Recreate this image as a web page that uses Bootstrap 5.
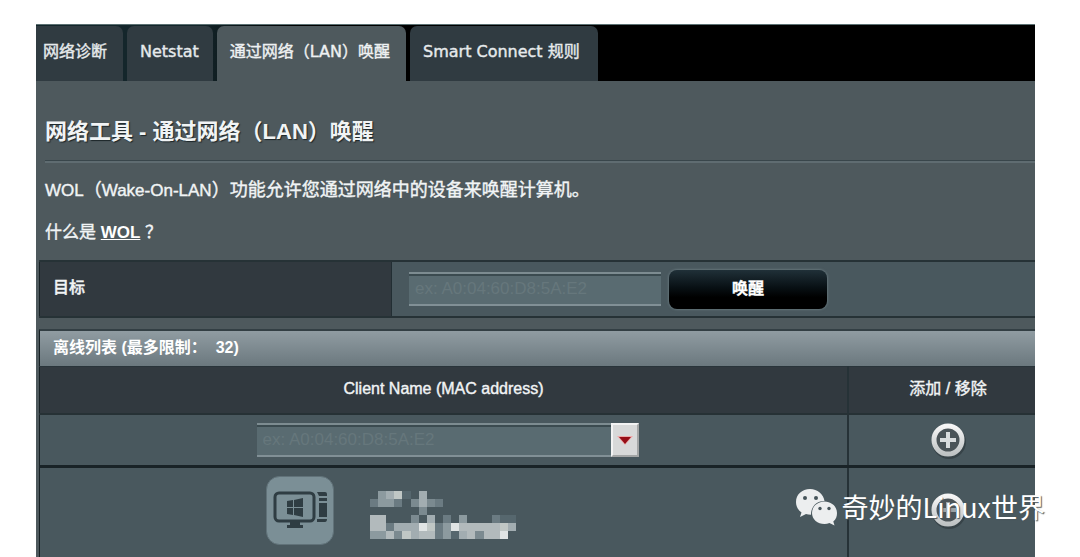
<!DOCTYPE html>
<html lang="zh-CN">
<head>
<meta charset="utf-8">
<meta name="viewport" content="width=device-width, initial-scale=1">
<title>网络工具 - 通过网络（LAN）唤醒</title>
<link href="https://cdn.jsdelivr.net/npm/bootstrap@5.3.0/dist/css/bootstrap.min.css" rel="stylesheet">
<style>
  body { background: #fff; color: #f1f4f5; font: 17px/24px "Liberation Sans", "Noto Sans CJK SC", sans-serif; -webkit-text-stroke: .4px; }
  .page { padding: 24px 45px 0 36px; overflow: hidden; }
  .panel { background: #4e595d; border-top: 1px solid #5b7072; }
  .tool-tabs { background: linear-gradient(90deg, #14262b 0, #14262b 16%, #000 26%); padding-top: 1px; gap: 4px; border: 0; }
  .tool-tabs .nav-link { font: 16px/24px "DejaVu Sans", "Noto Sans CJK SC", sans-serif; color: #e6eaec; background: #303b41; border: 0; border-radius: 7px 7px 0 0; padding: 14px 14px 17px 13px; margin: 0; }
  .tool-tabs li:first-child .nav-link { padding-left: 7px; padding-right: 16px; border-top-left-radius: 0; }
  .tool-tabs .nav-link.active { background: #4e595d; color: #eef1f2; padding-right: 16px; }
  .tool-tabs li:last-child .nav-link { padding-right: 18px; }
  h1 { font-size: 22px; line-height: 30px; font-weight: 700; -webkit-text-stroke: 0; text-shadow: 1px 1px 1px #1c2528; margin: 0; padding: 36px 9px 13px; }
  .rule { height: 3px; margin: 0 0 0 9px; background: #5f6c71; border-top: 1px solid #39464b; }
  .intro { padding: 15px 9px 15px; }
  .intro p { margin: 0 0 18px; }
  .intro p:last-child { margin: 0; }
  .intro span { font-size: 18px; }
  .intro a { color: #fff; font-weight: 700; -webkit-text-stroke: 0; }
  .tables { padding-left: 3px; }
  .grid { width: 100%; border-collapse: collapse; border-left: 1px solid #172124; }
  .grid th { background: #31393f; }
  .grid td { background: #49585e; }
  .target { border-top: 2px solid #263236; border-bottom: 2px solid #263236; }
  .target th { width: 352px; height: 56px; padding: 0 13px 3px; font-size: 16px; font-weight: 500; border-right: 1px solid #222e33; }
  .mac { font-size: 17px; line-height: 24px; height: 34px; padding: 2px 6px; color: #fff; background: #596b71; border: 0; border-top: 2px solid #7d8c91; border-bottom: 2px solid #819096; border-radius: 0; box-shadow: inset 0 2px #3b4b50; outline-offset: 0; }
  .mac::placeholder { color: #66777c; opacity: 1; -webkit-text-stroke: 0; }
  .mac:focus { background: #596b71; color: #fff; }
  .target .mac { width: 252px; }
  .wake { width: 158px; height: 39px; padding: 0; border: 0; border-radius: 8px; color: #fff; font-size: 16px; font-weight: 700; background: linear-gradient(#203038, #081014 45%, #000 70%); box-shadow: 0 0 2px 1px #627278; }
  .wake:hover { color: #fff; background: #0c161a; }
  .list { margin-top: 11px; }
  .list caption { caption-side: top; color: #fff; font-size: 16px; line-height: 24px; font-weight: 700; -webkit-text-stroke: 0; height: 37px; padding: 5px 13px 8px; background: linear-gradient(#909ca2, #6b787e); border-top: 2px solid #333f44; border-left: 1px solid #172124; }
  .list th { height: 47px; font-size: 16px; font-weight: 400; text-align: center; border-top: 1px solid #29343a; border-bottom: 2px solid #263135; padding: 0 0 1px; }
  .list td { text-align: center; vertical-align: middle; padding: 0; }
  .list tr > :last-child { width: 187px; border-left: 2px solid #263237; padding-left: 12px; }
  .entry td { height: 53px; border-bottom: 3px solid #192327; }
  .entry td:first-child { padding-left: 8px; }
  .entry .mac { width: 354px; }
  .drop { width: 28px; height: 34px; border: 2px solid; border-color: #f3f3f3 #a4a6a6 #a4a6a6 #f3f3f3; border-radius: 0; background: #d8d9d9; }
  .client td { height: 90px; vertical-align: top; padding-top: 8px; }
  .add { border: 0; background: none; padding: 0; vertical-align: middle; }
  .add svg, .client svg, .drop svg, .watermark svg { display: block; }
  .client .add { margin-top: 16px; }
  .names { margin: 15px 0 0 36px; }
  .client-row { padding-left: 226px; }
  .watermark { right: 35px; top: 487px; gap: 5px; color: #fff; font: 400 27px/40px "Noto Sans CJK SC", sans-serif; text-shadow: 1px 1px 1px #4b565b; -webkit-text-stroke: 0; white-space: nowrap; pointer-events: none; }
</style>
</head>
<body>
<div class="page position-relative">
  <main class="panel">
    <ul class="nav nav-tabs tool-tabs">
      <li class="nav-item"><a class="nav-link" href="#">网络诊断</a></li>
      <li class="nav-item"><a class="nav-link" href="#">Netstat</a></li>
      <li class="nav-item"><a class="nav-link active" aria-current="page" href="#">通过网络（LAN）唤醒</a></li>
      <li class="nav-item"><a class="nav-link" href="#">Smart Connect 规则</a></li>
    </ul>
    <h1>网络工具 - 通过网络（LAN）唤醒</h1>
    <div class="rule"></div>
    <div class="intro">
      <p>WOL<span>（</span>Wake-On-LAN<span>）功能允许您通过网络中的设备来唤醒计算机。</span></p>
      <p>什么是 <a href="#">WOL</a> ？</p>
    </div>
    <div class="tables">
      <table class="grid target">
        <tr>
          <th scope="row"><label for="target">目标</label></th>
          <td>
            <div class="d-flex align-items-center gap-2 ps-3">
              <input id="target" class="form-control mac" type="text" placeholder="ex: A0:04:60:D8:5A:E2">
              <button type="button" class="btn wake">唤醒</button>
            </div>
          </td>
        </tr>
      </table>
      <table class="grid list">
        <caption>离线列表 (最多限制： &nbsp;32)</caption>
        <thead>
          <tr><th scope="col"><label for="client">Client Name (MAC address)</label></th><th scope="col">添加 / 移除</th></tr>
        </thead>
        <tbody>
          <tr class="entry">
            <td>
              <div class="d-flex justify-content-center">
                <input id="client" class="form-control mac" type="text" placeholder="ex: A0:04:60:D8:5A:E2">
                <button type="button" class="btn drop d-flex align-items-center justify-content-center p-0" aria-label="选择设备">
                  <svg width="16" height="10" viewBox="0 0 16 10"><path d="M0 1h16L8 10z" fill="#eda9a9"/><path d="M2 2h12L8 9z" fill="#960f18"/></svg>
                </button>
              </div>
            </td>
            <td>
              <button type="button" class="add" aria-label="添加">
                <svg width="36" height="38" viewBox="0 0 36 38">
                  <defs><linearGradient id="ring" x2="0" y2="1"><stop stop-color="#f5f5f5"/><stop offset="1" stop-color="#bfc3c4"/></linearGradient></defs>
                  <circle cx="19" cy="21" r="17" fill="#2b353a" opacity=".6"/>
                  <circle cx="18" cy="19" r="14" fill="#4b5458" stroke="url(#ring)" stroke-width="5"/>
                  <path d="M18 11v16M10 19h16" stroke="#d9dcdd" stroke-width="4"/>
                </svg>
              </button>
            </td>
          </tr>
          <tr class="client">
            <td>
              <div class="client-row d-flex align-items-start">
                <svg width="68" height="69" viewBox="0 0 68 69" role="img" aria-label="Windows">
                  <rect x=".5" y=".5" width="67" height="68" rx="13" fill="#7b8f96" stroke="#617279"/>
                  <rect x="9" y="17" width="39" height="28" rx="4" fill="none" stroke="#2f3d43" stroke-width="3"/>
                  <path d="M24 46h10v3h3v3H21v-3h3z" fill="#2f3d43"/>
                  <path d="M21 25l6-1v7h-6zM28 24l9-2v9h-9zM21 32h6v7l-6-1zM28 32h9v9l-9-2z" fill="#2f3d43"/>
                  <path d="M51 16h8q2 0 2 2v2h-8zM53 22h8v3h-8zM53 27h8v14h-8zM51 43h10q0 3-2 3h-8z" fill="#2f3d43"/>
                </svg>
                <svg class="names" width="146" height="48" viewBox="0 0 18 6" preserveAspectRatio="none" shape-rendering="crispEdges" stroke-width="1" fill="none" aria-hidden="true">
                  <path stroke="#8c9a9f" d="M1 .5h1M1 1.5h2M11 3.5h1M9 4.5h1M9 5.5h1M0 5.5h2"/>
                  <path stroke="#a2adb1" d="M2 .5h1M6 .5h1M6 1.5h1M3 4.5h3M5 5.5h1M11 5.5h1M17 4.5h1M7 3.5h1"/>
                  <path stroke="#c0c7c5" d="M3 .5h1M4 5.5h1M16 4.5h1M7 4.5h1"/>
                  <path stroke="#56676e" d="M4 .5h1M16 3.5h2M10 5.5h1"/>
                  <path stroke="#6b7b82" d="M0 1.5h1M3 1.5h1M8 1.5h1M9 3.5h1M15 3.5h1M2 4.5h1M8 4.5h1M8 5.5h1"/>
                  <path stroke="#7b8a90" d="M5 1.5h1M7 1.5h1M6 2.5h1M5 3.5h1M3 5.5h1M13 5.5h1"/>
                  <path stroke="#b2babc" d="M0 3.5h2M0 4.5h2M2 5.5h1M6 5.5h2M11 4.5h5M12 5.5h1M14 5.5h2"/>
                  <path stroke="#e0e4e4" d="M6 4.5h1M10 4.5h1M16 5.5h1"/>
                </svg>
              </div>
            </td>
            <td>
              <button type="button" class="add" aria-label="添加">
                <svg width="36" height="38" viewBox="0 0 36 38">
                  <circle cx="19" cy="20" r="17" fill="#2b353a" opacity=".6"/>
                  <circle cx="18" cy="18" r="14" fill="#4b5458" stroke="url(#ring)" stroke-width="5"/>
                  <path d="M18 10v16M10 18h16" stroke="#9aa2a5" stroke-width="4"/>
                </svg>
              </button>
            </td>
          </tr>
        </tbody>
      </table>
    </div>
  </main>
  <div class="watermark position-absolute d-flex align-items-center">
    <svg width="42" height="38" viewBox="0 0 42 38" aria-hidden="true">
      <path d="M15 1C7 1 1 6.500 1 14c0 4.500 2 8 5.500 10.500L5 29l6-3q2 .7 5 .7C16 18 22 13 29.500 13 28.500 6 22.500 1 15 1z" fill="#eceeef"/>
      <path d="M29.500 13.500C22.500 13.500 17 18.500 17 25s5.500 11 12.500 11q2.500 0 5-.9l5 2.400-1.200-4C41 31.500 42 28.500 42 25c0-6.500-5.500-11.500-12.500-11.500z" fill="#eceeef"/>
      <g fill="#46545a"><circle cx="10" cy="10" r="2"/><circle cx="21" cy="10" r="2"/><circle cx="25" cy="20.500" r="1.700"/><circle cx="34" cy="20.500" r="1.700"/></g>
    </svg>
    <span>奇妙的Linux世界</span>
  </div>
</div>
<script src="https://cdn.jsdelivr.net/npm/bootstrap@5.3.0/dist/js/bootstrap.bundle.min.js"></script>
</body>
</html>
